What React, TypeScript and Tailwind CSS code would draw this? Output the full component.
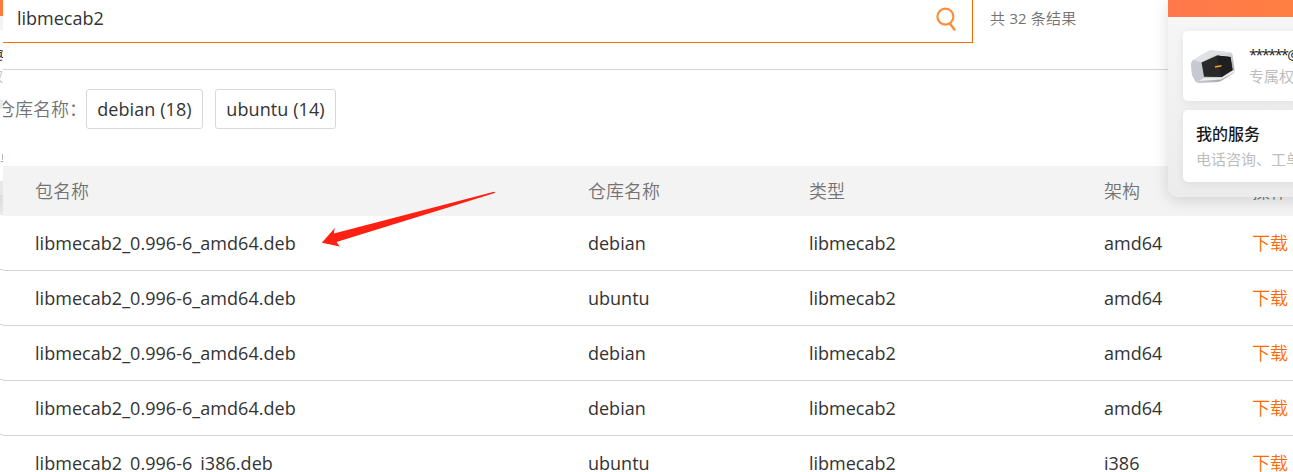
import React from 'react';

const rows = [
  { name: 'libmecab2_0.996-6_amd64.deb', repo: 'debian', type: 'libmecab2', arch: 'amd64' },
  { name: 'libmecab2_0.996-6_amd64.deb', repo: 'ubuntu', type: 'libmecab2', arch: 'amd64' },
  { name: 'libmecab2_0.996-6_amd64.deb', repo: 'debian', type: 'libmecab2', arch: 'amd64' },
  { name: 'libmecab2_0.996-6_amd64.deb', repo: 'debian', type: 'libmecab2', arch: 'amd64' },
  { name: 'libmecab2_0.996-6_i386.deb', repo: 'ubuntu', type: 'libmecab2', arch: 'i386' },
];

const columns = 'grid grid-cols-[553px_221px_295px_148px_60px] pl-8';

function EdgeStrip() {
  return (
    <div className="flex h-full w-[3px] shrink-0 flex-col overflow-hidden bg-white">
      <div className="h-4 shrink-0 bg-[#ff7a3c]" />
      <div className="h-[14px] shrink-0 bg-[#f3f3f3]" />
      <div className="flex h-[38px] shrink-0 items-center justify-end pt-[10px] text-[15px] leading-4 text-[#222]"><span className="-mr-[3px]">@</span></div>
      <div className="flex h-8 shrink-0 items-start justify-end text-[14px] leading-4 text-[#c4c4c4]">权</div>
      <div className="h-[9px] shrink-0 bg-[#ebebeb]" />
      <div className="flex h-[72px] shrink-0 items-end justify-start pb-[15px] text-[14px] leading-4 text-[#aaa]">单</div>
      <div className="h-[14px] shrink-0 bg-[#e9e9e9]" />
      <div className="h-5 shrink-0 bg-gradient-to-b from-[#dcdcdc] to-[#e9e9e9]" />
      <div className="h-[55px] shrink-0 border-b border-[#d4d4d4]" />
      <div className="h-[55px] shrink-0 border-b border-[#d4d4d4]" />
      <div className="h-[55px] shrink-0 border-b border-[#d4d4d4]" />
      <div className="h-[55px] shrink-0 border-b border-[#d4d4d4]" />
    </div>
  );
}

function SearchIcon() {
  return (
    <svg width="22" height="26" viewBox="0 0 22 26" fill="none" stroke="#ff8c38" strokeLinecap="round">
      <circle cx="9.4" cy="10.6" r="8" strokeWidth="2.2" />
      <path d="M14.2 18 18.4 23.6" strokeWidth="2.5" />
    </svg>
  );
}

function Device() {
  return (
    <svg className="shrink-0" width="46" height="34" viewBox="0 0 46 34">
      <defs>
        <linearGradient id="shell" x1="0" y1="0" x2="1" y2="1">
          <stop offset="0" stopColor="#cfd1d6" />
          <stop offset="0.45" stopColor="#d9dbdf" />
          <stop offset="1" stopColor="#8b8b8e" />
        </linearGradient>
      </defs>
      <path d="M19 .8Q21 0 23 .5L40 2.2Q42 2.4 42.5 4.5L44.5 20Q44.5 22 43 23.5L31 31Q29 32 27 32L9 33Q7 33 5.5 31.5L2 25 1 15Q1 12 3 10Z" fill="url(#shell)" />
      <path d="M19 .8Q21 0 23 .5L40 2.2 24 5 11 12.5 3 10Z" fill="#dfe1e4" />
      <path d="M11 12.5 14 27.5 5.5 31.5 2 25 1 15Q1 12 3 10Z" fill="#c6c9d0" />
      <path d="M14 28 32 27.5 43 20.5 44.5 20Q44.5 22 43 23L31 29.5 9 31Z" fill="#eeeef0" />
      <path d="M11.5 12.5 27 5.4 40.5 7 42.5 20 31.5 27 14 26.7Z" fill="#292929" />
      <path d="M27 5.4 29 16 31.5 27 42.5 20 40.5 7Z" fill="#1f1f20" />
      <path d="M25 17.1 31.5 15.8" stroke="#f5a524" strokeWidth="1.5" />
    </svg>
  );
}

function AccountPanel() {
  return (
    <aside className="absolute top-0 left-[1168px] h-[197px] w-[160px] overflow-hidden rounded-bl-[10px] bg-gradient-to-b from-[#f7f7f7] to-[#ececec]">
      <div className="h-[17px] bg-gradient-to-r from-[#ff784b] to-[#ff8140]" />
      <div className="flex flex-col gap-[9px] pt-[14px] pl-[15px]">
        <div className="flex h-[70px] rounded-[5px] bg-white pt-[19px] pl-[7px] shadow-[0_2px_10px_rgba(0,0,0,0.07)]">
          <Device />
          <div className="ml-[13px] whitespace-nowrap">
            <div className="mt-[-6px] h-[21px] text-[15px] leading-[21px] tracking-[-1.9px] text-[#222]">******@</div>
            <div className="text-[15px] leading-[22px] text-[#bdbdbd]">专属权益</div>
          </div>
        </div>
        <div className="h-[72px] rounded-[5px] bg-white pt-[12px] pl-[13px] whitespace-nowrap shadow-[0_2px_10px_rgba(0,0,0,0.07)]">
          <div className="text-[16px] leading-6 font-medium text-[#191919]">我的服务</div>
          <div className="mt-[2px] text-[15px] leading-[22px] text-[#bdbdbd]">电话咨询、工单</div>
        </div>
      </div>
    </aside>
  );
}

export default function App() {
  return (
    <div className="relative flex h-[472px] w-[1293px] overflow-hidden bg-white font-['Open_Sans','Noto_Sans_CJK_SC',sans-serif] text-[18px] text-[#333]">
      <EdgeStrip />
      <main className="min-w-0 flex-1 overflow-hidden">
        <div className="flex h-[70px] items-start border-b border-[#d4d4d4]">
          <div className="flex h-[43px] w-[970px] items-start justify-between border-r border-b border-[#ff6a00] pr-[14px] pl-[14px]">
            <span className="pt-[6px] leading-6">libmecab2</span>
            <span className="pt-[6px]"><SearchIcon /></span>
          </div>
          <div className="pt-[7px] pl-[17px] text-[15px] leading-[22px] tracking-[0.25px] font-[350] text-[#737373]">共 <span className="font-normal tracking-normal">32</span> 条结果</div>
        </div>
        <div className="flex h-[96px] items-start pt-[19px]">
          <span className="ml-[-6px] w-[89px] whitespace-nowrap leading-10 font-[350] text-[#737373]">仓库名称：</span>
          <button className="h-10 w-[117px] rounded-[3px] border border-[#d9d9d9] tracking-[0.08px] whitespace-nowrap">debian (18)</button>
          <button className="ml-3 h-10 w-[121px] rounded-[3px] border border-[#d9d9d9] tracking-[0.08px] whitespace-nowrap">ubuntu (14)</button>
        </div>
        <div className={`${columns} h-[50px] items-center bg-[#f3f3f3] font-[350] text-[#737373]`}>
          <span>包名称</span>
          <span>仓库名称</span>
          <span>类型</span>
          <span>架构</span>
          <span>操作</span>
        </div>
        {rows.map((row, i) => (
          <div key={i} className={`${columns} h-[55px] items-center border-b border-[#d4d4d4] whitespace-nowrap`}>
            <span className="tracking-[0.04px]">{row.name}</span>
            <span>{row.repo}</span>
            <span>{row.type}</span>
            <span>{row.arch}</span>
            <a className="font-[350] text-[#ff6a00]">下载</a>
          </div>
        ))}
      </main>
      <div className="absolute top-0 left-[1168px] h-[197px] w-[160px] rounded-bl-[10px] shadow-[0_3px_16px_rgba(0,0,0,0.14)]" />
      <AccountPanel />
      <svg className="absolute top-[180px] left-[310px]" width="200" height="75" viewBox="0 0 200 75">
        <path d="M11.8 62.8 24.8 48 23.8 53.5 184 11.8Q186 12.3 184 13.3L26.5 62 29.8 66.5Z" fill="#ff2014" />
      </svg>
    </div>
  );
}
